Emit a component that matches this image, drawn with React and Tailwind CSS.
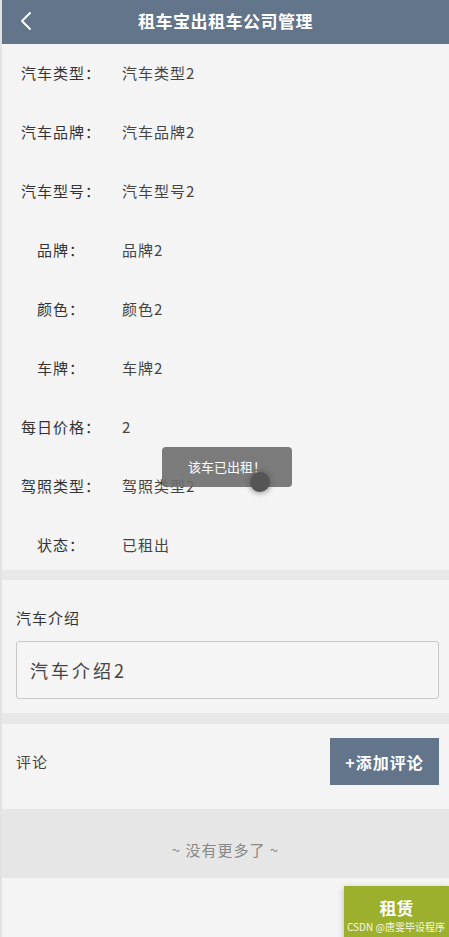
const rows = [
  ['汽车类型：', '汽车类型2'],
  ['汽车品牌：', '汽车品牌2'],
  ['汽车型号：', '汽车型号2'],
  ['品牌：', '品牌2'],
  ['颜色：', '颜色2'],
  ['车牌：', '车牌2'],
  ['每日价格：', '2'],
  ['驾照类型：', '驾照类型2'],
  ['状态：', '已租出'],
];

export default function App() {
  return (
    <div
      className="relative w-[449px] h-[937px] overflow-hidden bg-[#f4f4f4] border-l-2 border-[#e2e2e2] text-[#333]"
      style={{ fontFamily: '"Noto Sans CJK SC", "Noto Sans", sans-serif' }}
    >
      {/* header */}
      <div className="relative h-[44px] bg-[#63758b] flex items-center justify-center">
        <button className="absolute left-[14px] top-[9px] w-[20px] h-[24px] flex items-center justify-center">
          <svg width="12" height="20" viewBox="0 0 12 20" fill="none">
            <polyline points="10,2 2,10 10,18" stroke="#fff" strokeWidth="2" strokeLinecap="round" strokeLinejoin="round" />
          </svg>
        </button>
        <h1 className="text-white text-[17px] font-bold tracking-[0.5px] -mt-[3px]">租车宝出租车公司管理</h1>
      </div>

      {/* detail rows */}
      <div className="pt-[4px] flex flex-col gap-[9px]">
        {rows.map(([label, value]) => (
          <div key={label} className="h-[50px] flex items-center text-[15px] tracking-[1px]">
            <span className="w-[80px] ml-[19px] text-center text-[#333]">{label}</span>
            <span className="ml-[21px] text-[#444]">{value}</span>
          </div>
        ))}
      </div>

      <div className="h-[10px] bg-[#e8e8e8]" />

      {/* intro */}
      <div className="pl-[14px] pr-[10px] pt-[28px] pb-[14px]">
        <p className="text-[15px] tracking-[1px] leading-[20px] text-[#333]">汽车介绍</p>
        <div className="mt-[13px] h-[58px] border border-[#c8c8c8] rounded-[3px] bg-[#f5f5f5] flex items-center px-[13px] text-[18px] text-[#444] tracking-[3px]">
          汽车介绍2
        </div>
      </div>

      <div className="h-[11px] bg-[#e8e8e8]" />

      {/* comments */}
      <div className="h-[85px] pl-[14px] pr-[10px] pt-[14px] flex items-start justify-between">
        <span className="mt-[14px] text-[15px] tracking-[1px] leading-[20px] text-[#444]">评论</span>
        <button className="w-[109px] h-[47px] bg-[#63758b] text-white text-[16px] tracking-[1px] font-bold flex items-center justify-center">
          +添加评论
        </button>
      </div>

      <div className="h-[69px] bg-[#e6e6e6] flex items-center justify-center pt-[14px]">
        <span className="text-[15px] tracking-[1px] text-[#888]">~ 没有更多了 ~</span>
      </div>

      {/* footer */}
      <div className="h-[59px] flex justify-end pt-[8px]">
        <button className="relative w-[105px] h-[56px] bg-[#9cb02d] shadow-[0_2px_6px_rgba(0,0,0,0.25)] flex flex-col items-center pt-[13px]">
          <span className="text-white text-[17px] font-bold leading-[18px]">租赁</span>
          <span className="absolute left-[3px] top-[36px] text-[10px] text-white/90 whitespace-nowrap leading-[10px]">CSDN @唐雯毕设程序</span>
        </button>
      </div>

      {/* toast */}
      <div className="absolute left-[160px] top-[447px] w-[130px] h-[40px] rounded-[4px] bg-[#6e6e6e]/90 flex items-center justify-center">
        <span className="text-white text-[13px]">该车已出租！</span>
      </div>
      <div className="absolute left-[248px] top-[472px] w-[20px] h-[20px] rounded-full bg-[#555] shadow-[0_0_4px_2px_rgba(80,80,80,0.4)]" />
    </div>
  );
}
